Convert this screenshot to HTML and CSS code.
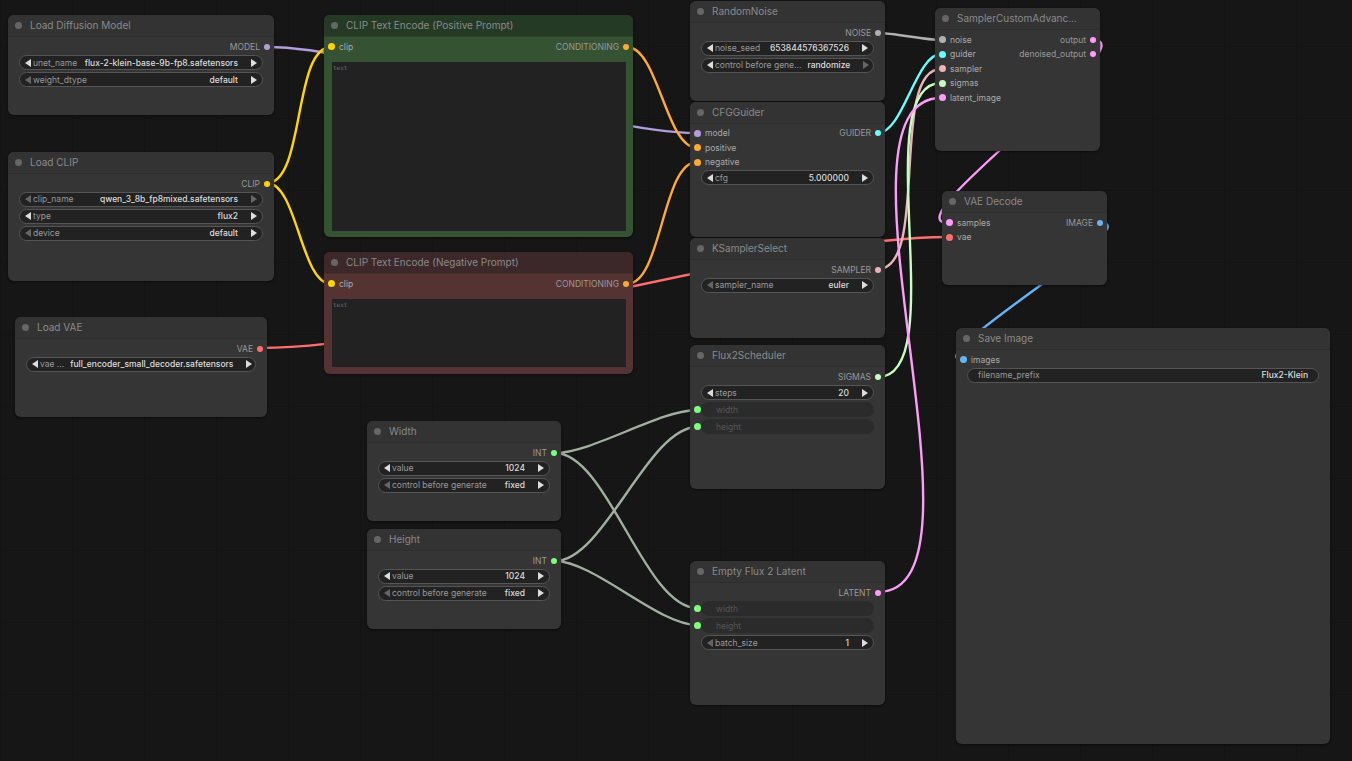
FILE: index.html
```html
<!DOCTYPE html>
<html lang="en">
<head>
  <meta charset="UTF-8">
  <title>Flux 2 Klein workflow</title>
  <link rel="stylesheet" href="styles.css">
</head>
<body>
  <div class="canvas">

    <!-- links, drawn under the nodes -->
    <svg class="links" width="1352" height="761" viewBox="0 0 1352 761" fill="none">
      <path class="l-model" d="M267 47C377 47 587 133 697 133"/>
      <path class="l-clip" d="M267 183C305 183 293 47 331 47"/>
      <path class="l-clip" d="M267 183C297 183 301 284 331 284"/>
      <path class="l-vae" d="M260 348C434 348 774 237 948 237"/>
      <path class="l-cond" d="M627 47C658 47 666 148 697 148"/>
      <path class="l-cond" d="M627 284C662 284 662 162 697 162"/>
      <path class="l-noise" d="M878 33C894 33 925 40 941 40"/>
      <path class="l-guider" d="M878 133C903 133 916 54 941 54"/>
      <path class="l-sampler" d="M878 269C930 269 889 69 941 69"/>
      <path class="l-sigmas" d="M878 377C953 377 866 83 941 83"/>
      <path class="l-latent" d="M878 592C1002.5 592 816.5 98 941 98"/>
      <path class="l-latent" d="M1093 40C1151 40 890 223 948 223"/>
      <path class="l-image" d="M1101 223C1150 223 914 360 963 360"/>
      <path class="l-int" d="M555 453C592 453 660 410 697 410"/>
      <path class="l-int" d="M555 561C604 561 648 427 697 427"/>
      <path class="l-int" d="M555 453C607.5 453 644.5 608 697 608"/>
      <path class="l-int" d="M555 561C594 561 658 625 697 625"/>
    </svg>

    <div class="node n-unet">
      <div class="head"><i></i>Load Diffusion Model</div>
      <div class="body">
        <div class="row out"><span class="slot">MODEL<b class="c-model"></b></span></div>
        <div class="widget"><em></em><label>unet_name</label><span>flux-2-klein-base-9b-fp8.safetensors</span><u></u></div>
        <div class="widget"><em class="dim"></em><label>weight_dtype</label><span>default</span><u></u></div>
      </div>
    </div>

    <div class="node n-clip">
      <div class="head"><i></i>Load CLIP</div>
      <div class="body">
        <div class="row out"><span class="slot">CLIP<b class="c-clip"></b></span></div>
        <div class="widget"><em class="dim"></em><label>clip_name</label><span>qwen_3_8b_fp8mixed.safetensors</span><u class="dim"></u></div>
        <div class="widget"><em></em><label>type</label><span>flux2</span><u></u></div>
        <div class="widget"><em class="dim"></em><label>device</label><span>default</span><u></u></div>
      </div>
    </div>

    <div class="node n-vae">
      <div class="head"><i></i>Load VAE</div>
      <div class="body">
        <div class="row out"><span class="slot">VAE<b class="c-vae"></b></span></div>
        <div class="widget"><em></em><label>vae ...</label><span>full_encoder_small_decoder.safetensors</span><u></u></div>
      </div>
    </div>

    <div class="node n-pos green">
      <div class="head"><i></i>CLIP Text Encode (Positive Prompt)</div>
      <div class="body">
        <div class="row"><span class="slot in"><b class="c-clip"></b>clip</span><span class="slot">CONDITIONING<b class="c-cond"></b></span></div>
        <div class="prompt">text</div>
      </div>
    </div>

    <div class="node n-neg red">
      <div class="head"><i></i>CLIP Text Encode (Negative Prompt)</div>
      <div class="body">
        <div class="row"><span class="slot in"><b class="c-clip"></b>clip</span><span class="slot">CONDITIONING<b class="c-cond"></b></span></div>
        <div class="prompt">text</div>
      </div>
    </div>

    <div class="node n-noise">
      <div class="head"><i></i>RandomNoise</div>
      <div class="body">
        <div class="row out"><span class="slot">NOISE<b class="c-noise"></b></span></div>
        <div class="widget"><em></em><label>noise_seed</label><span>653844576367526</span><u></u></div>
        <div class="widget"><em></em><label>control before gene...</label><span>randomize</span><u class="dim"></u></div>
      </div>
    </div>

    <div class="node n-guider">
      <div class="head"><i></i>CFGGuider</div>
      <div class="body">
        <div class="row"><span class="slot in"><b class="c-model"></b>model</span><span class="slot">GUIDER<b class="c-guider"></b></span></div>
        <div class="row"><span class="slot in"><b class="c-cond"></b>positive</span></div>
        <div class="row"><span class="slot in"><b class="c-cond"></b>negative</span></div>
        <div class="widget"><em></em><label>cfg</label><span>5.000000</span><u></u></div>
      </div>
    </div>

    <div class="node n-select">
      <div class="head"><i></i>KSamplerSelect</div>
      <div class="body">
        <div class="row out"><span class="slot">SAMPLER<b class="c-sampler"></b></span></div>
        <div class="widget"><em class="dim"></em><label>sampler_name</label><span>euler</span><u></u></div>
      </div>
    </div>

    <div class="node n-sched">
      <div class="head"><i></i>Flux2Scheduler</div>
      <div class="body">
        <div class="row out"><span class="slot">SIGMAS<b class="c-sigmas"></b></span></div>
        <div class="widget"><em></em><label>steps</label><span>20</span><u></u></div>
        <div class="linked"><b class="c-int"></b><div class="off">width</div></div>
        <div class="linked"><b class="c-int"></b><div class="off">height</div></div>
      </div>
    </div>

    <div class="node n-empty">
      <div class="head"><i></i>Empty Flux 2 Latent</div>
      <div class="body">
        <div class="row out"><span class="slot">LATENT<b class="c-latent"></b></span></div>
        <div class="linked"><b class="c-int"></b><div class="off">width</div></div>
        <div class="linked"><b class="c-int"></b><div class="off">height</div></div>
        <div class="widget"><em class="dim"></em><label>batch_size</label><span>1</span><u></u></div>
      </div>
    </div>

    <div class="node n-width">
      <div class="head"><i></i>Width</div>
      <div class="body">
        <div class="row out"><span class="slot">INT<b class="c-int"></b></span></div>
        <div class="widget"><em></em><label>value</label><span>1024</span><u></u></div>
        <div class="widget"><em class="dim"></em><label>control before generate</label><span>fixed</span><u></u></div>
      </div>
    </div>

    <div class="node n-height">
      <div class="head"><i></i>Height</div>
      <div class="body">
        <div class="row out"><span class="slot">INT<b class="c-int"></b></span></div>
        <div class="widget"><em></em><label>value</label><span>1024</span><u></u></div>
        <div class="widget"><em class="dim"></em><label>control before generate</label><span>fixed</span><u></u></div>
      </div>
    </div>

    <div class="node n-custom">
      <div class="head"><i></i>SamplerCustomAdvanc...</div>
      <div class="body">
        <div class="row"><span class="slot in"><b class="c-noise"></b>noise</span><span class="slot">output<b class="c-latent"></b></span></div>
        <div class="row"><span class="slot in"><b class="c-guider"></b>guider</span><span class="slot">denoised_output<b class="c-latent"></b></span></div>
        <div class="row"><span class="slot in"><b class="c-sampler"></b>sampler</span></div>
        <div class="row"><span class="slot in"><b class="c-sigmas"></b>sigmas</span></div>
        <div class="row"><span class="slot in"><b class="c-latent"></b>latent_image</span></div>
      </div>
    </div>

    <div class="node n-decode">
      <div class="head"><i></i>VAE Decode</div>
      <div class="body">
        <div class="row"><span class="slot in"><b class="c-latent"></b>samples</span><span class="slot">IMAGE<b class="c-image"></b></span></div>
        <div class="row"><span class="slot in"><b class="c-vae"></b>vae</span></div>
      </div>
    </div>

    <div class="node n-save">
      <div class="head"><i></i>Save Image</div>
      <div class="body">
        <div class="row"><span class="slot in"><b class="c-image"></b>images</span></div>
        <div class="widget text"><label>filename_prefix</label><span>Flux2-Klein</span></div>
      </div>
    </div>

  </div>
</body>
</html>
```
FILE: styles.css
```css
html, body { margin:0; padding:0; height:100%; background:#161616; }
body { overflow:hidden; font-family:"Inter", "Liberation Sans", sans-serif; }

.canvas {
  position:relative; width:1352px; height:761px; overflow:hidden;
  background-color:#161616;
  background-image:
    linear-gradient(to right, #131313 1px, transparent 1px),
    linear-gradient(to bottom, #131313 1px, transparent 1px);
  background-size:72px 72px;
  background-position:0 46px;
}

/* links */
.links { position:absolute; left:0; top:0; }
.links path { stroke-width:2.4; stroke-linecap:round; }
.l-model { stroke:#b39ddb; }
.l-clip { stroke:#ffd500; }
.l-vae { stroke:#ff6e6e; }
.l-cond { stroke:#ffa931; }
.l-noise { stroke:#b0b0b0; }
.l-guider { stroke:#66ffff; }
.l-sampler { stroke:#ecb4b4; }
.l-sigmas { stroke:#c5ffc0; }
.l-latent { stroke:#ff9cf9; }
.l-image { stroke:#64b5f6; }
.l-int { stroke:#9fb09f; }

/* slot colours */
.c-model { background:#b39ddb; }
.c-clip { background:#ffd500; }
.c-vae { background:#ff6e6e; }
.c-cond { background:#ffa931; }
.c-noise { background:#b0b0b0; }
.c-guider { background:#66ffff; }
.c-sampler { background:#ecb4b4; }
.c-sigmas { background:#c5ffc0; }
.c-latent { background:#ff9cf9; }
.c-image { background:#64b5f6; }
.c-int { background:#7dff7d; }

/* nodes */
.node {
  position:absolute; box-sizing:border-box;
  background:#353535; border-radius:6px;
  box-shadow:0 1px 3px rgba(0,0,0,0.5);
  color:#999; font-size:8.5px;
}
.head {
  display:flex; align-items:center; box-sizing:border-box;
  height:22px; padding:0 0 1px 7px;
  background:#333; border-bottom:1px solid #2e2e2e;
  border-radius:6px 6px 0 0;
  color:#8a8a8a; font-size:10px; white-space:nowrap;
}
.head i {
  width:7px; height:7px; margin-right:8px;
  border-radius:50%; background:#666;
}
.body { padding-top:2.5px; }
.n-sched .body, .n-empty .body, .n-unet .body { padding-top:3px; }
.n-guider .body { padding-top:2px; }

.row { display:flex; justify-content:space-between; height:14.5px; padding:0 4px; }
.row.out { justify-content:flex-end; }
.row + .widget, .row + .linked { margin-top:0.5px; }
.slot { display:flex; align-items:center; gap:4px; line-height:14px; white-space:nowrap; }
.slot b, .linked b { display:block; width:6px; height:6px; border-radius:50%; flex:none; }
.slot.in { gap:4.5px; color:#aaa; }
.slot.in b { width:7px; height:7px; margin-left:-0.5px; }

.widget, .off {
  display:flex; align-items:center; box-sizing:border-box;
  height:15px; margin:0 11px 2px;
  border-radius:8px; white-space:nowrap;
}
.widget {
  background:#222; border:1px solid #555; padding:0 5px;
  color:#999;
}
.widget label { margin-left:2px; margin-right:6px; }
.widget span { margin-left:auto; margin-right:13px; color:#ddd; font-weight:500; }
.widget em, .widget u { display:block; width:0; height:0; flex:none; border-style:solid; border-color:transparent; }
.widget em { border-width:4px 6px 4px 0; border-right-color:#ddd; }
.widget u { border-width:4px 0 4px 6px; border-left-color:#ddd; }
.widget em.dim { border-right-color:#666; }
.widget u.dim { border-left-color:#666; }
.widget.text { padding:0 10px; }
.widget.text label { margin-left:0; }
.widget.text span { margin-right:0; }

.linked { display:flex; align-items:center; height:15px; margin-bottom:2px; padding-left:4px; }
.linked b { width:7px; height:7px; margin-left:-0.5px; }
.off {
  flex:1; margin:0 11px 0 0.5px; padding-left:15px;
  background:#2b2b2b; color:#555;
}

/* coloured prompt nodes */
.green { background:#355233; }
.green .head { background:#253a25; border-color:#2c422b; }
.red { background:#553333; }
.red .head { background:#3c2828; border-color:#442d2d; }
.prompt {
  box-sizing:border-box; margin:8px 7px 0 8px; padding:2px 1px;
  background:#222; color:#666;
  font-family:"DejaVu Sans Mono", monospace; font-size:6px;
}
.n-pos .prompt { height:169px; }
.n-neg .prompt { height:68px; }

/* node places on the graph */
.n-unet { left:8px; top:15px; width:266px; height:100px; }
.n-clip { left:8px; top:152px; width:266px; height:129px; }
.n-vae { left:15px; top:317px; width:252px; height:100px; }
.n-pos { left:324px; top:15px; width:309px; height:222px; }
.n-neg { left:324px; top:252px; width:309px; height:122px; }
.n-noise { left:690px; top:1px; width:195px; height:100px; }
.n-guider { left:690px; top:102px; width:195px; height:135px; }
.n-select { left:690px; top:238px; width:195px; height:100px; }
.n-sched { left:690px; top:345px; width:195px; height:144px; }
.n-empty { left:690px; top:561px; width:195px; height:144px; }
.n-width { left:367px; top:421px; width:194px; height:100px; }
.n-height { left:367px; top:529px; width:194px; height:100px; }
.n-custom { left:935px; top:8px; width:165px; height:143px; }
.n-decode { left:942px; top:191px; width:165px; height:94px; }
.n-save { left:956px; top:328px; width:374px; height:416px; }
```
